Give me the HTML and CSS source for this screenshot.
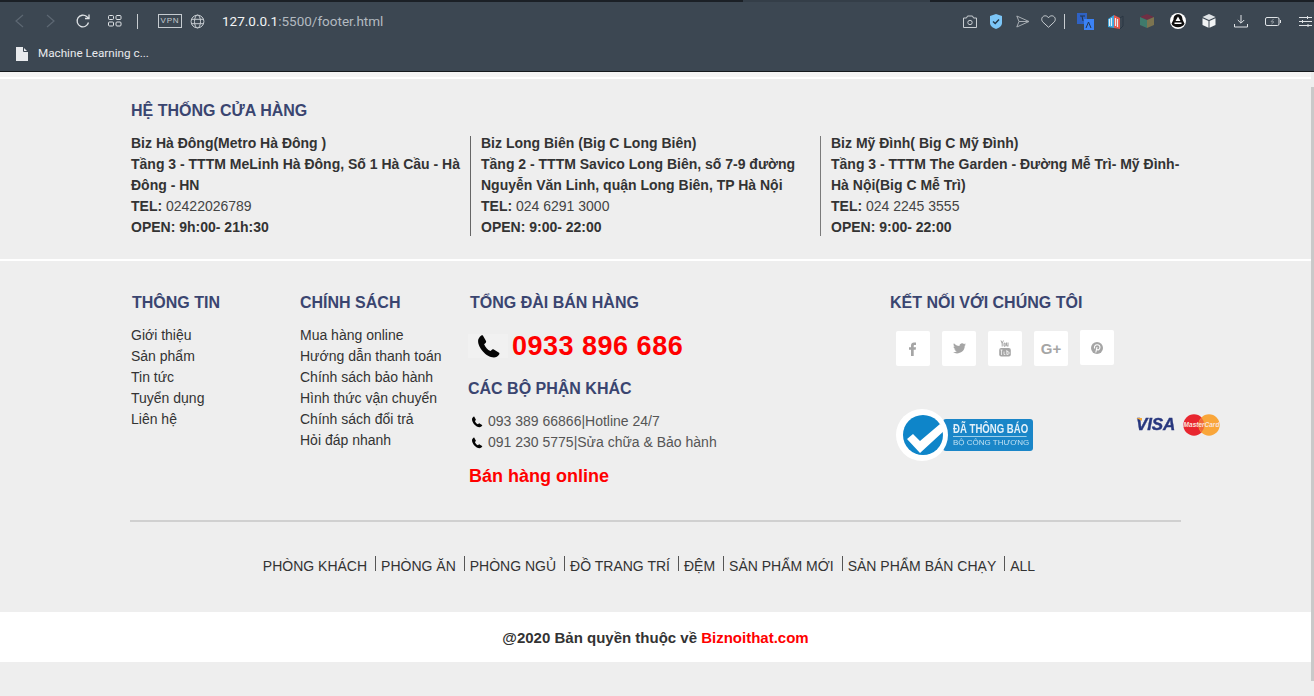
FILE: index.html
```html
<!DOCTYPE html>
<html lang="vi">
<head>
<meta charset="utf-8">
<title>footer</title>
<link rel="stylesheet" href="styles.css">
</head>
<body>
<header class="chrome">
  <div class="tabline"><span class="tab-active"></span></div>
  <div class="toolbar">
    <div class="tools-left">
      <svg class="ico back" width="14" height="16" viewBox="0 0 14 16" fill="none" stroke="#5d6873" stroke-width="1.2"><path d="M11 2 4 8l7 6"/></svg>
      <svg class="ico fwd" width="14" height="16" viewBox="0 0 14 16" fill="none" stroke="#5d6873" stroke-width="1.2"><path d="M3 2l7 6-7 6"/></svg>
      <svg class="ico reload" width="16" height="16" viewBox="0 0 16 16" fill="none" stroke="#dfe3e6" stroke-width="1.3"><path d="M13.5 9.5A5.8 5.8 0 1 1 11.7 3.6L14 5.4"/><path d="M14 1.5v4h-4" /></svg>
      <svg class="ico tabs" width="14" height="12" viewBox="0 0 14 12" fill="none" stroke="#dfe3e6" stroke-width="1"><rect x=".5" y=".5" width="5" height="4" rx="1"/><rect x="8" y=".5" width="5" height="4" rx="1"/><rect x=".5" y="7" width="5" height="4" rx="1"/><rect x="8" y="7" width="5" height="4" rx="1"/></svg>
      <span class="sep"></span>
      <span class="vpn">VPN</span>
      <svg class="ico globe" width="15" height="15" viewBox="0 0 15 15" fill="none" stroke="#c5cbd0" stroke-width="1"><circle cx="7.5" cy="7.5" r="6.4"/><ellipse cx="7.5" cy="7.5" rx="3" ry="6.4"/><path d="M1.2 5.3h12.6M1.2 9.7h12.6"/></svg>
      <span class="url"><b>127.0.0.1</b>:5500/footer.html</span>
    </div>
    <div class="tools-right">
      <svg class="t1" width="14" height="13" viewBox="0 0 14 13" fill="none" stroke="#c8cdd1"><path d="M.5 3h3l1-2h5l1 2h3v9.500h-13z"/><circle cx="7" cy="7.500" r="2.200"/></svg>
      <svg class="t2" width="12" height="15" viewBox="0 0 12 15"><path d="M6 0l6 2v7c0 3-3 5-6 6-3-1-6-3-6-6V2z" fill="#7cc6f7"/><path d="M3 7.500l2.200 2L9 5.500" fill="none" stroke="#24384a" stroke-width="1.500"/></svg>
      <svg class="t3" width="14" height="13" viewBox="0 0 14 13" fill="none" stroke="#a7adb3"><path d="M.8 1 13 6.500.8 12 3 6.500zM3 6.500h10"/></svg>
      <svg class="t4" width="15" height="13" viewBox="0 0 15 13" fill="none" stroke="#c8cdd1"><path d="M7.500 12.300 1.600 6.800C-.5 4 1.500.8 4.200.8c1.500 0 2.600.8 3.300 2 .7-1.200 1.800-2 3.300-2 2.700 0 4.700 3.200 2.600 6z"/></svg>
      <span class="sep small"></span>
      <svg class="t5" width="17" height="17" viewBox="0 0 17 17"><rect x="0" y="0" width="10" height="11" fill="#2f62c4"/><rect x="7" y="6" width="10" height="11" fill="#3b82f6"/><path d="M3 3h5M5 3l1 5M9 15l2.500-6 2.500 6" fill="none" stroke="#23344a"/></svg>
      <svg class="t6" width="16" height="15" viewBox="0 0 16 15"><path d="M0 5l6-4v13l-6-1z" fill="#3aa7e0"/><path d="M6 1l6 3v11l-6-1z" fill="#e4574b"/><path d="M1.500 5v7M3.500 4v8M7.500 4v8M9.500 5v8" stroke="#e8eef2" stroke-width="1.200"/><path d="M12 4l3-2v10l-3 3" fill="none" stroke="#2a3642"/></svg>
      <svg class="t7" width="14" height="14" viewBox="0 0 14 14"><path d="M7 0l7 3-7 3-7-3z" fill="#6f2f44"/><path d="M0 3l7 3v8l-7-3z" fill="#3f7a6c"/><path d="M14 3 7 6v8l7-3z" fill="#7c7450"/></svg>
      <svg class="t8" width="16" height="16" viewBox="0 0 16 16"><circle cx="8" cy="8" r="8" fill="#fff"/><path d="M8 1.200c3 0 4.500 2.300 4.500 5.300l2 4.300c-1 2-3.500 3.400-6.500 3.400s-5.500-1.400-6.500-3.400l2-4.300C3.500 3.500 5 1.200 8 1.200z" fill="#0d0d0d"/><path d="M8 3.500 5.500 8h5zM4.500 9.500h7V11h-7z" fill="#fff"/></svg>
      <svg class="t9" width="14" height="14" viewBox="0 0 14 14"><path d="M7 0l6.500 3L7 6 .5 3z" fill="#dfe3e6"/><path d="M.5 4.300 6.500 7v6.800L.5 11zM13.500 4.300 7.500 7v6.800l6-2.800z" fill="#f1f3f4"/></svg>
      <svg class="t10" width="14" height="14" viewBox="0 0 14 14" fill="none" stroke="#dfe3e6"><path d="M7 1v8M3.800 6 7 9.200 10.200 6M.5 10v3h13v-3"/></svg>
      <svg class="t11" width="16" height="9" viewBox="0 0 16 9" fill="none" stroke="#dfe3e6"><rect x=".5" y=".5" width="13.500" height="8" rx="1.500"/><path d="M15.500 3v3" /><path d="M8.500 2 6 4.800h3L6.500 7" stroke="#8f979e"/></svg>
      <svg class="t12" width="13" height="11" viewBox="0 0 13 11" fill="none" stroke="#dfe3e6"><path d="M0 1.500h13M0 5.500h13M0 9.500h13M8.500 0v3M3.500 4v3M9 8v3"/></svg>
    </div>
  </div>
  <div class="bookmarks">
    <svg width="12" height="14" viewBox="0 0 12 14"><path d="M0 0h7l5 5v9H0z" fill="#e8eaed"/><path d="M7.500 0v4.500H12" fill="none" stroke="#3c4752"/></svg>
    <span>Machine Learning c...</span>
  </div>
</header>

<main class="page">
  <div class="topstrip"></div>
  <section class="stores">
    <h3 class="heading stores-title">HỆ THỐNG CỬA HÀNG</h3>
    <div class="store-row">
      <div class="store">
        <b>Biz Hà Đông(Metro Hà Đông )</b><br>
        <b>Tầng 3 - TTTM MeLinh Hà Đông, Số 1 Hà Cầu - Hà Đông - HN</b><br>
        <b>TEL:</b> 02422026789<br>
        <b>OPEN: 9h:00- 21h:30</b>
      </div>
      <div class="store ruled">
        <b>Biz Long Biên (Big C Long Biên)</b><br>
        <b>Tầng 2 - TTTM Savico Long Biên, số 7-9 đường Nguyễn Văn Linh, quận Long Biên, TP Hà Nội</b><br>
        <b>TEL:</b> 024 6291 3000<br>
        <b>OPEN: 9:00- 22:00</b>
      </div>
      <div class="store ruled">
        <b>Biz Mỹ Đình( Big C Mỹ Đình)</b><br>
        <b>Tầng 3 - TTTM The Garden - Đường Mễ Trì- Mỹ Đình-Hà Nội(Big C Mễ Trì)</b><br>
        <b>TEL:</b> 024 2245 3555<br>
        <b>OPEN: 9:00- 22:00</b>
      </div>
    </div>
  </section>
  <div class="divider"></div>
  <section class="info">
    <div class="info-grid">
      <div class="col col-a">
        <h3 class="heading">THÔNG TIN</h3>
        <ul class="links">
          <li>Giới thiệu</li><li>Sản phẩm</li><li>Tin tức</li><li>Tuyển dụng</li><li>Liên hệ</li>
        </ul>
      </div>
      <div class="col col-b">
        <h3 class="heading">CHÍNH SÁCH</h3>
        <ul class="links">
          <li>Mua hàng online</li><li>Hướng dẫn thanh toán</li><li>Chính sách bảo hành</li><li>Hình thức vận chuyển</li><li>Chính sách đổi trả</li><li>Hỏi đáp nhanh</li>
        </ul>
      </div>
      <div class="col col-c">
        <h3 class="heading sales">TỔNG ĐÀI BÁN HÀNG</h3>
        <div class="hotline">
          <span class="phone-box"><svg width="25" height="25" viewBox="0 0 24 24"><path d="M6.600 1.500 9.600 6.800c.3.6.2 1.100-.2 1.500L7.800 9.800c1 2.700 3.300 5.400 6.100 6.600l1.700-1.500c.4-.4 1-.4 1.500-.1l5 3.300c.5.400.5 1 .1 1.500-1.200 1.700-3 2.900-5 2.900C9.800 22.500 1.800 13 2 6.500c0-1.900 1.400-3.800 3.100-5.100.5-.3 1.200-.4 1.500.1z" fill="#050505"/></svg></span>
          <span class="hotline-num">0933 896 686</span>
        </div>
        <h3 class="heading other">CÁC BỘ PHẬN KHÁC</h3>
        <div class="contact"><svg width="12" height="12" viewBox="0 0 24 24"><path d="M6.600 1.500 9.600 6.800c.3.6.2 1.100-.2 1.500L7.800 9.800c1 2.700 3.300 5.400 6.100 6.600l1.700-1.500c.4-.4 1-.4 1.500-.1l5 3.300c.5.400.5 1 .1 1.500-1.200 1.700-3 2.900-5 2.900C9.800 22.500 1.800 13 2 6.500c0-1.900 1.400-3.800 3.100-5.100.5-.3 1.200-.4 1.500.1z" fill="#050505"/></svg>093 389 66866|Hotline 24/7</div>
        <div class="contact"><svg width="12" height="12" viewBox="0 0 24 24"><path d="M6.600 1.500 9.600 6.800c.3.6.2 1.100-.2 1.500L7.800 9.800c1 2.700 3.300 5.400 6.100 6.600l1.700-1.500c.4-.4 1-.4 1.500-.1l5 3.300c.5.400.5 1 .1 1.500-1.200 1.700-3 2.900-5 2.900C9.800 22.500 1.800 13 2 6.500c0-1.900 1.400-3.800 3.100-5.100.5-.3 1.200-.4 1.500.1z" fill="#050505"/></svg>091 230 5775|Sửa chữa &amp; Bảo hành</div>
        <p class="online">Bán hàng online</p>
      </div>
      <div class="col col-d">
        <h3 class="heading">KẾT NỐI VỚI CHÚNG TÔI</h3>
        <div class="socials">
          <span class="soc"><svg width="10" height="14" viewBox="0 0 10 14"><path d="M3 14V7.700H1V5.300h2V3.600C3 1.500 4.200.5 6 .5h2v2.400H6.800c-.9 0-1.100.4-1.100 1.100v1.300H8l-.3 2.400h-2V14z" fill="#a5a5a5"/></svg></span>
          <span class="soc"><svg width="13" height="11" viewBox="0 0 13 11"><path d="M13 1.500c-.5.200-1 .4-1.500.4.500-.3 1-.8 1.200-1.400-.5.300-1.100.5-1.700.6A2.700 2.700 0 0 0 6.400 3C4.200 2.900 2.200 1.800.9.200.200 1.400.5 3 1.700 3.800c-.4 0-.8-.1-1.200-.3 0 1.300.9 2.400 2.100 2.700-.4.100-.8.100-1.200 0 .3 1.100 1.300 1.800 2.500 1.900C2.700 9 1.400 9.500 0 9.300 3.900 11.900 12 10 11.700 2.700c.5-.3.900-.7 1.300-1.200z" fill="#a5a5a5"/></svg></span>
          <span class="soc"><svg width="12" height="17" viewBox="0 0 12 17"><rect x=".2" y="8" width="11.600" height="8.500" rx="2" fill="#a5a5a5"/><path d="M2 .5l1.200 3v3M4.400.5l-1.200 3M5 3.200h1.200v3H5zM7.500 2.500v3.200c0 .5.800.5 1.500-.2M9 2.500v4" fill="none" stroke="#a5a5a5"/><path d="M2.500 10v5M1.500 10h2M5 11.500v3h1.300M7.800 10v4.500h1.400v-3h-1.400M10 13h1" fill="none" stroke="#fff" stroke-width=".7"/></svg></span>
          <span class="soc"><span class="gplus">G+</span></span>
          <span class="soc soc-up"><svg width="12" height="12" viewBox="0 0 12 12"><circle cx="6" cy="6" r="6" fill="#a5a5a5"/><path d="M4.800 10.500 6 5M3.800 6.500C2.800 4.800 4 2.800 6.200 2.800c2 0 3 1.400 2.700 3-.3 1.800-2 2.600-3.200 1.500" fill="none" stroke="#fff" stroke-width="1.100"/></svg></span>
        </div>
        <div class="badges">
          <div class="gov">
            <span class="gov-disc"><svg width="44" height="44" viewBox="0 0 44 44"><circle cx="21" cy="21" r="20" fill="#0e85c9"/><path d="M5 25l6-5 7 7L38 10l5 6-25 23z" fill="#fff"/></svg></span>
            <span class="gov-tag"><span class="gov-top">ĐÃ THÔNG BÁO</span><span class="gov-sub">BỘ CÔNG THƯƠNG</span></span>
          </div>
          <div class="pay">
            <span class="visa">VISA</span>
            <svg width="37" height="22" viewBox="0 0 37 22"><circle cx="11" cy="11" r="10.700" fill="#e8262f"/><circle cx="26" cy="11" r="10.700" fill="#f9a63a"/><path d="M18.500 3.800a10.700 10.700 0 0 1 0 14.400 10.700 10.700 0 0 1 0-14.400z" fill="#f0683a"/><text class="mc" x="18.500" y="13" text-anchor="middle">MasterCard</text></svg>
          </div>
        </div>
      </div>
    </div>
    <div class="rule"></div>
    <nav class="cats">
      <span class="cat first">PHÒNG KHÁCH</span><span class="cat">PHÒNG ĂN</span><span class="cat">PHÒNG NGỦ</span><span class="cat">ĐỒ TRANG TRÍ</span><span class="cat">ĐỆM</span><span class="cat">SẢN PHẨM MỚI</span><span class="cat">SẢN PHẨM BÁN CHẠY</span><span class="cat">ALL</span>
    </nav>
  </section>
  <div class="copy">@2020 Bản quyền thuộc về <span class="brand">Biznoithat.com</span></div>
</main>
<div class="scrollbar"></div>
</body>
</html>
```
FILE: styles.css
```css
* { box-sizing: border-box; }
html, body { margin: 0; padding: 0; height: 696px; overflow: hidden; }
body { background: #eee; font-family: "Liberation Sans", Arial, sans-serif; position: relative; color: #333; }

.chrome { height: 72px; background: #3c4752; border-bottom: 1px solid #14181c; font-family: "Open Sans", "Noto Sans", sans-serif; }
.tabline { height: 2px; background: #1b2026; position: relative; }
.tab-active { position: absolute; left: 743px; top: 0; width: 187px; height: 2px; background: #343e48; }
.toolbar { height: 38px; display: flex; justify-content: space-between; align-items: center; }
.tools-left { display: flex; align-items: center; padding-left: 12px; }
.ico { display: block; flex: none; }
.fwd { margin-left: 18px; }
.reload { margin-left: 17px; }
.tabs { margin-left: 17px; }
.sep { width: 1px; height: 15px; background: #c8cdd1; margin-left: 15px; flex: none; }
.vpn { margin-left: 20px; border: 1px solid #c5cbd0; color: #c5cbd0; font-family: "Liberation Sans", sans-serif; font-size: 8px; letter-spacing: .8px; width: 24px; height: 14px; line-height: 12px; text-align: center; }
.globe { margin-left: 8px; }
.url { margin-left: 17px; font-family: Roboto, sans-serif; font-size: 13.5px; color: #b3bac0; }
.url b { font-weight: 400; color: #f2f4f5; }
.tools-right { display: flex; align-items: center; padding-right: 2px; }
.tools-right svg { display: block; flex: none; }
.t2 { margin-left: 13px; } .t3 { margin-left: 14px; } .t4 { margin-left: 11px; }
.sep.small { margin-left: 8px; }
.tools-right .t5 { margin-left: 12px; } .t6 { margin-left: 14px; } .t7 { margin-left: 16px; } .t8 { margin-left: 16px; }
.t9 { margin-left: 16px; } .t10 { margin-left: 18px; } .t11 { margin-left: 17px; } .t12 { margin-left: 18px; }
.bookmarks { height: 28px; display: flex; align-items: center; gap: 10px; padding-left: 16px; font-family: Roboto, sans-serif; font-size: 11.7px; color: #e8eaed; }
.bookmarks span { position: relative; top: -1px; }

.page { width: 1311px; }
.topstrip { height: 5px; background: #f4f4f4; }
.stores { background: #eee; border-top: 2px solid #fff; height: 182px; padding: 22px 0 0 131px; }
.heading { margin: 0; font-family: "Liberation Sans", Arial, sans-serif; font-size: 16px; line-height: 20px; font-weight: 700; color: #3a4570; }
.stores-title { margin-bottom: 12px; }
.store-row { display: grid; grid-template-columns: 339px 350px 370px; }
.store { font-size: 14px; line-height: 21px; color: #444; padding-right: 4px; position: relative; }
.store b { color: #333; }
.store.ruled { padding-left: 11px; padding-right: 0; }
.store.ruled::before { content: ""; position: absolute; left: 0; top: 3px; width: 1px; height: 100px; background: #666; }
.store.ruled + .store.ruled::before { background: #7a7a7a; }
.divider { height: 2px; background: #fff; }
.info { padding: 32px 133px 0 130px; height: 351px; }
.info-grid { display: grid; grid-template-columns: 170px 169px 421px 291px; height: 227px; }
.col-a .heading { padding-left: 2px; }
.col-a .links { padding-left: 1px; }
.links { list-style: none; margin: 12px 0 0; padding: 0; font-size: 14px; line-height: 21px; color: #333; }
.sales { padding-left: 1px; }
.hotline { display: flex; align-items: center; margin: 15px 0 0 -1px; height: 36px; }
.phone-box { width: 40px; height: 24px; background: #f1f1f1; display: flex; align-items: center; justify-content: center; flex: none; }
.hotline-num { margin-left: 4px; font-size: 27px; font-weight: 700; color: #f00; letter-spacing: .5px; line-height: 36px; }
.other { margin: 15px 0 12px -1px; }
.contact { display: flex; align-items: center; gap: 5px; font-size: 14px; line-height: 21px; color: #555; padding-left: 2px; }
.online { margin: 11px 0 0; font-size: 18px; line-height: 24px; font-weight: 700; color: #f00; }
.socials { display: flex; gap: 12px; margin: 18px 0 0 6px; }
.soc { width: 34px; height: 35px; background: #fff; border-radius: 2px; display: flex; align-items: center; justify-content: center; }
.soc-up { margin-top: -1px; }
.gplus { font-size: 15px; font-weight: 700; color: #a5a5a5; }
.badges { display: flex; justify-content: space-between; align-items: flex-start; margin-top: 43px; width: 330px; padding-left: 6px; }
.gov { display: flex; align-items: center; position: relative; }
.gov-disc { width: 52px; height: 52px; border-radius: 50%; background: #fff; display: flex; align-items: center; justify-content: center; position: relative; z-index: 1; filter: blur(.3px); }
.gov-disc svg { margin-left: 3px; margin-top: 2px; }
.gov-tag { margin-left: -5px; width: 90px; height: 32px; background: #1a86c8; border-radius: 3px; display: flex; flex-direction: column; align-items: flex-start; padding-left: 10px; color: #e4f1f9; line-height: 1; filter: blur(.3px); }
.gov-top { font-size: 12px; font-weight: 700; margin-top: 4px; padding-bottom: 1px; border-bottom: 1px solid #9fd0ea; white-space: nowrap; width: 92px; transform: scaleX(.8); transform-origin: 0 50%; }
.gov-sub { font-size: 8px; margin-top: 2px; white-space: nowrap; color: #bfe0f2; }
.pay { display: flex; align-items: center; gap: 8px; margin-top: 5px; }
.visa { position: relative; font-size: 17px; font-weight: 700; font-style: italic; color: #28377e; letter-spacing: -.2px; -webkit-text-stroke: .4px #28377e; filter: blur(.3px); }
.visa::before { content: ""; position: absolute; left: 0; top: 3px; width: 6px; height: 3px; background: #f2a93b; clip-path: polygon(0 0, 100% 0, 100% 100%); }
.mc { font-family: "Liberation Sans", sans-serif; font-size: 6.5px; font-weight: 700; font-style: italic; fill: #fbe3dc; }
.rule { height: 2px; background: #d0d0d0; width: 1051px; }
.cats { display: flex; justify-content: center; align-items: center; margin-top: 35px; font-size: 14px; line-height: 18px; color: #333; padding-right: 10px; }
.cat { margin-left: 8px; padding-left: 6px; position: relative; }
.cat::before { content: ""; position: absolute; left: 0; top: -1px; height: 15px; width: 1px; background: #555; }
.cat.first { margin: 0; padding: 0; }
.cat.first::before { display: none; }
.copy { height: 50px; background: #fff; text-align: center; font-size: 15px; line-height: 52px; font-weight: 700; color: #333; }
.brand { color: #f00; }
.scrollbar { position: absolute; right: 0; top: 87px; width: 3px; height: 594px; background: #c9c9c9; }
```
